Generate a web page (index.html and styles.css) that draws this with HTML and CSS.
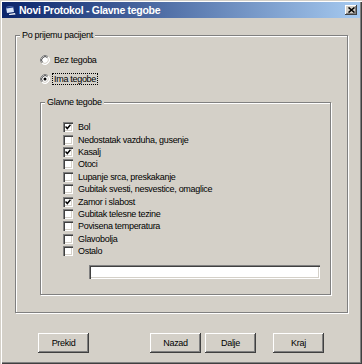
FILE: index.html
```html
<!DOCTYPE html>
<html>
<head>
<meta charset="utf-8">
<link rel="stylesheet" href="styles.css">
</head>
<body>
<div class="window">
  <div class="titlebar">
    <span class="ticon"><svg width="10" height="9" viewBox="0 0 10 9"><path d="M0 1 L7 0 L8 6 L1 7 Z" fill="#d8e4f8"/><path d="M0 1 L7 0 L7.3 1.6 L0.3 2.6 Z" fill="#1c3c8c"/><path d="M3 8 L9 7 L9.5 8.5 L3.2 9 Z" fill="#fff"/></svg></span>
    <span class="title">Novi Protokol - Glavne tegobe</span>
    <span class="close"><svg width="7" height="6" viewBox="0 0 7 6"><path d="M0.5 0.5 L6.5 5.5 M6.5 0.5 L0.5 5.5" stroke="#000" stroke-width="1.6"/></svg></span>
  </div>
  <div class="content">
    <div class="group outer">
      <span class="legend">Po prijemu pacijent</span>
      <div class="radio-row">
        <span class="radio"><svg width="10" height="10" viewBox="0 0 10 10"><circle cx="5" cy="5" r="4.5" fill="#fff"/><path d="M1.82 8.18 A4.5 4.5 0 0 1 8.18 1.82" stroke="#808080" fill="none"/><path d="M8.18 1.82 A4.5 4.5 0 0 1 1.82 8.18" stroke="#fff" fill="none"/><path d="M2.53 7.47 A3.5 3.5 0 0 1 7.47 2.53" stroke="#404040" fill="none"/><path d="M7.47 2.53 A3.5 3.5 0 0 1 2.53 7.47" stroke="#d4d0c8" fill="none"/></svg></span>
        <span class="label">Bez tegoba</span>
      </div>
      <div class="radio-row">
        <span class="radio"><svg width="10" height="10" viewBox="0 0 10 10"><circle cx="5" cy="5" r="4.5" fill="#fff"/><path d="M1.82 8.18 A4.5 4.5 0 0 1 8.18 1.82" stroke="#808080" fill="none"/><path d="M8.18 1.82 A4.5 4.5 0 0 1 1.82 8.18" stroke="#fff" fill="none"/><path d="M2.53 7.47 A3.5 3.5 0 0 1 7.47 2.53" stroke="#404040" fill="none"/><path d="M7.47 2.53 A3.5 3.5 0 0 1 2.53 7.47" stroke="#d4d0c8" fill="none"/><circle cx="5" cy="5" r="1.5" fill="#000"/></svg></span>
        <span class="label focus">Ima tegobe</span>
      </div>
      <div class="group inner">
        <span class="legend">Glavne tegobe</span>
        <ul class="checks">
          <li><span class="cb"><svg width="6" height="6" viewBox="0 0 6 6"><path d="M0.5 2.5 L2.3 4.5 L5.5 0.8" stroke="#000" stroke-width="1.5" fill="none"/></svg></span>Bol</li>
          <li><span class="cb"></span>Nedostatak vazduha, gusenje</li>
          <li><span class="cb"><svg width="6" height="6" viewBox="0 0 6 6"><path d="M0.5 2.5 L2.3 4.5 L5.5 0.8" stroke="#000" stroke-width="1.5" fill="none"/></svg></span>Kasalj</li>
          <li><span class="cb"></span>Otoci</li>
          <li><span class="cb"></span>Lupanje srca, preskakanje</li>
          <li><span class="cb"></span>Gubitak svesti, nesvestice, omaglice</li>
          <li><span class="cb"><svg width="6" height="6" viewBox="0 0 6 6"><path d="M0.5 2.5 L2.3 4.5 L5.5 0.8" stroke="#000" stroke-width="1.5" fill="none"/></svg></span>Zamor i slabost</li>
          <li><span class="cb"></span>Gubitak telesne tezine</li>
          <li><span class="cb"></span>Povisena temperatura</li>
          <li><span class="cb"></span>Glavobolja</li>
          <li><span class="cb"></span>Ostalo</li>
        </ul>
        <div class="textbox"></div>
      </div>
    </div>
    <div class="buttons">
      <span class="btn btn-prekid">Prekid</span>
      <span class="btn btn-nazad">Nazad</span>
      <span class="btn btn-dalje">Dalje</span>
      <span class="btn btn-kraj">Kraj</span>
    </div>
  </div>
</div>
</body>
</html>
```
FILE: styles.css
```css
html, body {
  margin: 0;
  padding: 0;
  background: #d4d0c8;
}
body {
  font-family: "Liberation Sans", Arial, sans-serif;
  font-size: 9px;
  letter-spacing: -0.3px;
  color: #000;
}
.window {
  width: 362px;
  height: 364px;
  box-sizing: border-box;
  padding: 2px;
  background: #d4d0c8;
  box-shadow: inset 1px 1px 0 #d4d0c8, inset 2px 2px 0 #fff, inset -1px -1px 0 #404040, inset -2px -2px 0 #808080;
}
.titlebar {
  height: 16px;
  display: flex;
  align-items: center;
  padding: 0 3px 0 4px;
  background: linear-gradient(to right, #0a246a, #a6caf0);
}
.ticon {
  display: flex;
  width: 10px;
  height: 9px;
  margin-right: 3px;
}
.title {
  color: #fff;
  font-weight: bold;
  font-size: 10.5px;
  letter-spacing: -0.3px;
  line-height: 16px;
}
.close {
  margin-left: auto;
  width: 12px;
  height: 10px;
  display: flex;
  align-items: center;
  justify-content: center;
  background: #d4d0c8;
  box-shadow: inset -1px -1px 0 #404040, inset 1px 1px 0 #fff, inset -2px -2px 0 #808080;
}
.content {
  padding-left: 13px;
}
.group {
  position: relative;
  box-sizing: border-box;
  border: 1px solid #808080;
  box-shadow: inset 1px 1px 0 #fff, 1px 1px 0 #fff;
}
.legend {
  position: absolute;
  top: -7px;
  left: 4px;
  padding: 0 2px;
  line-height: 12px;
  background: #d4d0c8;
}
.outer {
  width: 333px;
  height: 278px;
  margin-top: 17px;
  padding: 18px 0 0 24px;
}
.radio-row {
  display: flex;
  align-items: center;
  height: 12px;
}
.radio-row + .radio-row {
  margin-top: 7px;
}
.radio {
  display: flex;
  width: 10px;
  height: 10px;
  margin-right: 2px;
}
.label {
  border: 1px solid transparent;
  padding: 0 1px;
  line-height: 10px;
}
.label.focus {
  border: 1px dotted #000;
}
.inner {
  width: 291px;
  height: 193px;
  margin-top: 17px;
  padding: 18px 0 0 22px;
}
.checks {
  list-style: none;
  margin: 0;
  padding: 0;
}
.checks li {
  display: flex;
  align-items: center;
  height: 12.4px;
}
.cb {
  display: flex;
  align-items: center;
  justify-content: center;
  width: 10px;
  height: 10px;
  margin-right: 5px;
  box-sizing: border-box;
  background: #fff;
  box-shadow: inset 1px 1px 0 #808080, inset 2px 2px 0 #404040, inset -1px -1px 0 #fff, inset -2px -2px 0 #d4d0c8;
}
.textbox {
  width: 231px;
  height: 14px;
  margin: 8px 0 0 26px;
  background: #fff;
  box-shadow: inset 1px 1px 0 #808080, inset 2px 2px 0 #404040, inset -1px -1px 0 #fff, inset -2px -2px 0 #d4d0c8;
}
.buttons {
  display: flex;
  margin-top: 20px;
  padding-left: 23px;
}
.btn {
  width: 51px;
  height: 20px;
  display: flex;
  align-items: center;
  justify-content: center;
  box-shadow: inset -1px -1px 0 #404040, inset 1px 1px 0 #fff, inset -2px -2px 0 #808080;
}
.btn-nazad { margin-left: 61px; }
.btn-dalje { margin-left: 4px; }
.btn-kraj { margin-left: 17px; }
```
